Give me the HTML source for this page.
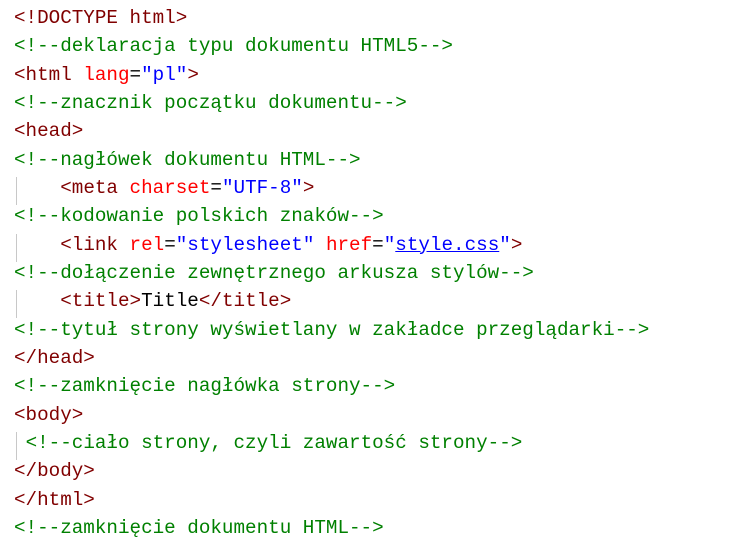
<!DOCTYPE html>
<html><head><style>
body{margin:0;background:#fff;width:730px;height:555px;overflow:hidden}
pre{margin:0;padding:4px 0 0 14px;font-family:"Liberation Mono","DejaVu Sans Mono",monospace;font-size:19.25px;line-height:28.33px;color:#000}
.t{color:#800000}.a{color:#ff0000}.v{color:#0000ff}.c{color:#008000}
.u{text-decoration:underline}
.g{position:relative}
.g:before{content:"";position:absolute;left:2px;top:0;height:28px;width:1px;background:#c8c8c8}
</style></head><body><pre><span class="t">&lt;!DOCTYPE html&gt;</span>
<span class="c">&lt;!--deklaracja typu dokumentu HTML5--&gt;</span>
<span class="t">&lt;html </span><span class="a">lang</span>=<span class="v">"pl"</span><span class="t">&gt;</span>
<span class="c">&lt;!--znacznik początku dokumentu--&gt;</span>
<span class="t">&lt;head&gt;</span>
<span class="c">&lt;!--nagłówek dokumentu HTML--&gt;</span>
<span class="g">    </span><span class="t">&lt;meta </span><span class="a">charset</span>=<span class="v">"UTF-8"</span><span class="t">&gt;</span>
<span class="c">&lt;!--kodowanie polskich znaków--&gt;</span>
<span class="g">    </span><span class="t">&lt;link </span><span class="a">rel</span>=<span class="v">"stylesheet"</span> <span class="a">href</span>=<span class="v">"<span class="u">style.css</span>"</span><span class="t">&gt;</span>
<span class="c">&lt;!--dołączenie zewnętrznego arkusza stylów--&gt;</span>
<span class="g">    </span><span class="t">&lt;title&gt;</span>Title<span class="t">&lt;/title&gt;</span>
<span class="c">&lt;!--tytuł strony wyświetlany w zakładce przeglądarki--&gt;</span>
<span class="t">&lt;/head&gt;</span>
<span class="c">&lt;!--zamknięcie nagłówka strony--&gt;</span>
<span class="t">&lt;body&gt;</span>
<span class="g"> </span><span class="c">&lt;!--ciało strony, czyli zawartość strony--&gt;</span>
<span class="t">&lt;/body&gt;</span>
<span class="t">&lt;/html&gt;</span>
<span class="c">&lt;!--zamknięcie dokumentu HTML--&gt;</span></pre></body></html>
